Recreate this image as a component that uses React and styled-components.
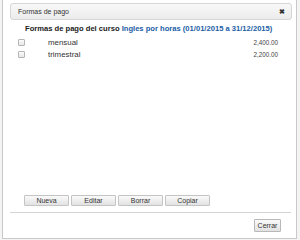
import React from 'react'
import styled, { createGlobalStyle } from 'styled-components'

const Global = createGlobalStyle`
  html, body {
    margin: 0;
    padding: 0;
    background: #ffffff;
    font-family: "Liberation Sans", Arial, sans-serif;
  }
`

const Page = styled.div`
  width: 300px;
  height: 240px;
  padding: 0 3px 0 2px;
  box-sizing: border-box;
  background: #f4f4f4;
`

const Dialog = styled.div`
  height: 239px;
  box-sizing: border-box;
  background: #fff;
  border: 1px solid #c9c9c9;
  border-top: none;
  display: flex;
  flex-direction: column;
  padding: 3px 4px 0 7px;
`

const TitleBar = styled.div`
  height: 17px;
  box-sizing: border-box;
  border: 1px solid #d6d6d6;
  border-radius: 3px;
  background: linear-gradient(#f8f8f8, #ececec);
  display: flex;
  align-items: center;
  justify-content: space-between;
  padding: 0 6px 0 7px;
  font-size: 7px;
  color: #333;
`

const Close = styled.span`
  font-size: 7px;
  font-weight: bold;
  color: #333;
  line-height: 1;
`

const Body = styled.div`
  flex: 1;
  display: flex;
  flex-direction: column;
  padding: 4px 14px 0 8px;
`

const Heading = styled.div`
  padding-left: 7px;
  font-size: 7.6px;
  font-weight: bold;
  color: #222;
  line-height: 10px;
  white-space: nowrap;
  margin-bottom: 2px;
`

const Link = styled.span`
  color: #1c5ea6;
`

const Row = styled.div`
  display: flex;
  align-items: center;
  height: 12px;
`

const Check = styled.span`
  width: 7px;
  height: 7px;
  box-sizing: border-box;
  border: 1px solid #b5b5b5;
  border-radius: 1px;
  background: linear-gradient(#fcfcfc, #e6e6e6);
`

const Label = styled.span`
  flex: 1;
  padding-left: 23px;
  font-size: 7.9px;
  color: #333;
`

const Amount = styled.span`
  font-size: 6.3px;
  color: #444;
`

const Spacer = styled.div`
  flex: 1;
`

const ButtonBar = styled.div`
  display: flex;
  gap: 2px;
  padding: 0 0 6px 6px;
`

const Button = styled.button`
  width: ${p => p.$w || 45}px;
  height: 11px;
  padding: 0;
  box-sizing: border-box;
  border: 1px solid #c4c4c4;
  border-radius: 1px;
  background: linear-gradient(#fafafa, #e2e2e2);
  font-family: "Liberation Sans", Arial, sans-serif;
  font-size: 7px;
  color: #333;
  line-height: 9px;
`

const Footer = styled.div`
  border-top: 1px solid #d4d4d4;
  height: 26px;
  box-sizing: border-box;
  display: flex;
  align-items: center;
  justify-content: flex-end;
  padding-right: 10px;
  margin-right: 1px;
`

const Small = styled(Button)`
  height: 13px;
  border-color: #b8b8b8;
`

export default function App() {
  return (
    <Page>
      <Global />
      <Dialog>
        <TitleBar>
          <span>Formas de pago</span>
          <Close>✖</Close>
        </TitleBar>
        <Body>
          <Heading>
            Formas de pago del curso <Link>Ingles por horas (01/01/2015 a 31/12/2015)</Link>
          </Heading>
          <Row>
            <Check />
            <Label>mensual</Label>
            <Amount>2,400.00</Amount>
          </Row>
          <Row>
            <Check />
            <Label>trimestral</Label>
            <Amount>2,200.00</Amount>
          </Row>
          <Spacer />
          <ButtonBar>
            <Button>Nueva</Button>
            <Button>Editar</Button>
            <Button>Borrar</Button>
            <Button>Copiar</Button>
          </ButtonBar>
        </Body>
        <Footer>
          <Small $w={27}>Cerrar</Small>
        </Footer>
      </Dialog>
    </Page>
  )
}
